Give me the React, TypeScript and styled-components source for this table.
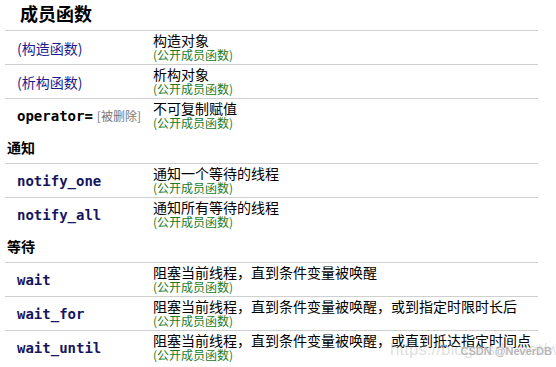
import React from 'react';
import styled, { createGlobalStyle } from 'styled-components';

interface Member {
  name: string;
  code?: boolean;
  deleted?: boolean;
  desc: string;
  plain?: boolean;
}

const groups: { title?: string; rows: Member[] }[] = [
  {
    rows: [
      { name: '(构造函数)', desc: '构造对象' },
      { name: '(析构函数)', desc: '析构对象' },
      { name: 'operator=', code: true, plain: true, deleted: true, desc: '不可复制赋值' },
    ],
  },
  {
    title: '通知',
    rows: [
      { name: 'notify_one', code: true, desc: '通知一个等待的线程' },
      { name: 'notify_all', code: true, desc: '通知所有等待的线程' },
    ],
  },
  {
    title: '等待',
    rows: [
      { name: 'wait', code: true, desc: '阻塞当前线程，直到条件变量被唤醒' },
      { name: 'wait_for', code: true, desc: '阻塞当前线程，直到条件变量被唤醒，或到指定时限时长后' },
      { name: 'wait_until', code: true, desc: '阻塞当前线程，直到条件变量被唤醒，或直到抵达指定时间点' },
    ],
  },
];

const App: React.FC = () => {
  return (
    <>
      <GlobalStyle />
      <Page>
        <Title>成员函数</Title>
        {groups.map((g, gi) => (
          <Group key={gi}>
            {g.title && <SectionTitle>{g.title}</SectionTitle>}
            <Table>
              {g.rows.map((r) => (
                <Row key={r.name}>
                  <NameCell>
                    {r.code ? <Code $plain={r.plain}>{r.name}</Code> : <Link>{r.name}</Link>}
                    {r.deleted && <Deleted>[被删除]</Deleted>}
                  </NameCell>
                  <DescCell>
                    <Desc>{r.desc}</Desc>
                    <Note>(公开成员函数)</Note>
                  </DescCell>
                </Row>
              ))}
            </Table>
          </Group>
        ))}
        <Watermark>
          <Url>https://blog.csdn.net/wa034</Url>
          <Brand>CSDN @NeverDB</Brand>
        </Watermark>
      </Page>
    </>
  );
};

const GlobalStyle = createGlobalStyle`
  body {
    margin: 0;
    background: #fff;
    font-family: "DejaVu Sans", "Noto Sans CJK SC", sans-serif;
    color: #000;
  }
`;

const Page = styled.div`
  position: relative;
  width: 556px;
  height: 367px;
  overflow: hidden;
  padding: 0 18px 0 5px;
  box-sizing: border-box;
`;

const Title = styled.div`
  height: 30px;
  padding-left: 15px;
  font-family: "Noto Sans CJK SC", sans-serif;
  font-weight: 700;
  font-size: 18px;
  line-height: 26px;
`;

const Group = styled.div`
  display: flex;
  flex-direction: column;
`;

const SectionTitle = styled.div`
  height: 31px;
  padding-left: 2px;
  font-family: "Noto Sans CJK SC", sans-serif;
  font-weight: 700;
  font-size: 14px;
  line-height: 31px;
`;

const Table = styled.div`
  display: flex;
  flex-direction: column;
`;

const Row = styled.div`
  display: grid;
  grid-template-columns: 148px 1fr;
  height: 34px;
  border-top: 1px solid #cfcfcf;
  box-sizing: border-box;
`;

const NameCell = styled.div`
  display: flex;
  align-items: center;
  padding-left: 12px;
  gap: 4px;
`;

const Link = styled.span`
  font-family: "Noto Sans CJK SC", sans-serif;
  font-size: 14px;
  color: #1c1c8f;
`;

const Code = styled.span<{ $plain?: boolean }>`
  font-family: "DejaVu Sans Mono", monospace;
  font-weight: 700;
  font-size: 14px;
  color: ${(p) => (p.$plain ? '#000' : '#15155e')};
`;

const Deleted = styled.span`
  font-family: "Noto Sans CJK SC", sans-serif;
  font-size: 12px;
  color: #777;
`;

const DescCell = styled.div`
  display: flex;
  flex-direction: column;
  justify-content: center;
`;

const Desc = styled.span`
  font-family: "Noto Sans CJK SC", sans-serif;
  font-size: 14px;
  line-height: 15px;
  white-space: nowrap;
`;

const Note = styled.span`
  font-family: "Noto Sans CJK SC", sans-serif;
  font-size: 12px;
  line-height: 14px;
  color: #1d7a1d;
`;

const Watermark = styled.div`
  position: absolute;
  right: 0;
  bottom: 2px;
  width: 172px;
  height: 26px;
  pointer-events: none;
`;

const Url = styled.span`
  position: absolute;
  left: 6px;
  top: 1px;
  font-family: "Liberation Sans", sans-serif;
  font-size: 17px;
  color: rgba(160, 160, 160, 0.35);
  white-space: nowrap;
`;

const Brand = styled.span`
  position: absolute;
  right: 4px;
  top: 6px;
  font-family: "Liberation Sans", sans-serif;
  font-weight: 700;
  font-size: 11px;
  color: rgba(150, 150, 150, 0.7);
  text-shadow: 0 0 1px #fff, 0 0 2px #fff;
  white-space: nowrap;
`;

export default App;
